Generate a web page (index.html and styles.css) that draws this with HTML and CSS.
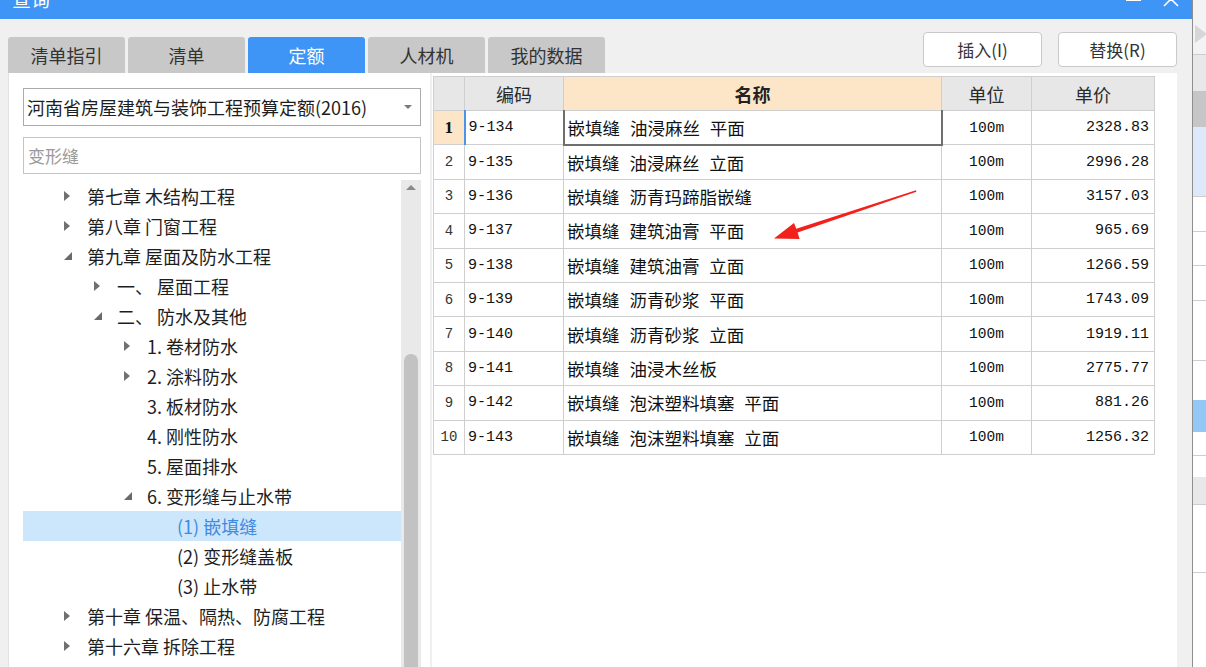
FILE: index.html
```html
<!DOCTYPE html>
<html lang="zh-CN">
<head>
<meta charset="utf-8">
<title>查询</title>
<link rel="stylesheet" href="styles.css">
</head>
<body>
<div class="screen">
  <div class="window">
    <div class="titlebar">
      <span class="title">查询</span>
      <div class="winbtns">
        <span class="wb-min"></span>
        <svg class="wb-close" width="16" height="16" viewBox="0 0 16 16"><path d="M1 1 L15 15 M15 1 L1 15" stroke="#fff" stroke-width="1.6" fill="none"/></svg>
      </div>
    </div>
    <div class="body">
      <div class="toolbar">
        <div class="tabs">
          <div class="tab">清单指引</div>
          <div class="tab">清单</div>
          <div class="tab active">定额</div>
          <div class="tab">人材机</div>
          <div class="tab">我的数据</div>
        </div>
        <div class="actions">
          <button class="btn">插入(I)</button>
          <button class="btn">替换(R)</button>
        </div>
      </div>
      <div class="panes">
        <div class="left">
          <div class="combo"><span class="combo-text">河南省房屋建筑与装饰工程预算定额(2016)</span><span class="combo-arrow"></span></div>
          <div class="search">变形缝</div>
          <div class="treewrap">
            <ul class="tree">
              <li class="node l0"><span class="tw"><svg width="6" height="10" viewBox="0 0 6 10"><path d="M0 0 L6 5 L0 10 Z" fill="#707070"/></svg></span>第七章 木结构工程</li>
              <li class="node l0"><span class="tw"><svg width="6" height="10" viewBox="0 0 6 10"><path d="M0 0 L6 5 L0 10 Z" fill="#707070"/></svg></span>第八章 门窗工程</li>
              <li class="node l0"><span class="tw"><svg width="8" height="8" viewBox="0 0 8 8"><path d="M8 0 L8 8 L0 8 Z" fill="#6a6a6a"/></svg></span>第九章 屋面及防水工程</li>
              <li class="node l1"><span class="tw"><svg width="6" height="10" viewBox="0 0 6 10"><path d="M0 0 L6 5 L0 10 Z" fill="#707070"/></svg></span>一、 屋面工程</li>
              <li class="node l1"><span class="tw"><svg width="8" height="8" viewBox="0 0 8 8"><path d="M8 0 L8 8 L0 8 Z" fill="#6a6a6a"/></svg></span>二、 防水及其他</li>
              <li class="node l2"><span class="tw"><svg width="6" height="10" viewBox="0 0 6 10"><path d="M0 0 L6 5 L0 10 Z" fill="#707070"/></svg></span>1. 卷材防水</li>
              <li class="node l2"><span class="tw"><svg width="6" height="10" viewBox="0 0 6 10"><path d="M0 0 L6 5 L0 10 Z" fill="#707070"/></svg></span>2. 涂料防水</li>
              <li class="node l2"><span class="tw"></span>3. 板材防水</li>
              <li class="node l2"><span class="tw"></span>4. 刚性防水</li>
              <li class="node l2"><span class="tw"></span>5. 屋面排水</li>
              <li class="node l2"><span class="tw"><svg width="8" height="8" viewBox="0 0 8 8"><path d="M8 0 L8 8 L0 8 Z" fill="#6a6a6a"/></svg></span>6. 变形缝与止水带</li>
              <li class="node l3 selected"><span class="tw"></span>(1) 嵌填缝</li>
              <li class="node l3"><span class="tw"></span>(2) 变形缝盖板</li>
              <li class="node l3"><span class="tw"></span>(3) 止水带</li>
              <li class="node l0"><span class="tw"><svg width="6" height="10" viewBox="0 0 6 10"><path d="M0 0 L6 5 L0 10 Z" fill="#707070"/></svg></span>第十章 保温、隔热、防腐工程</li>
              <li class="node l0"><span class="tw"><svg width="6" height="10" viewBox="0 0 6 10"><path d="M0 0 L6 5 L0 10 Z" fill="#707070"/></svg></span>第十六章 拆除工程</li>
            </ul>
            <div class="vscroll">
              <span class="vs-up"></span>
              <span class="vs-thumb"></span>
            </div>
          </div>
        </div>
        <div class="right">
          <table class="grid">
            <colgroup>
              <col class="c-rn"><col class="c-code"><col class="c-name"><col class="c-unit"><col class="c-price">
            </colgroup>
            <thead>
              <tr><th class="rn"></th><th>编码</th><th class="hl">名称</th><th>单位</th><th>单价</th></tr>
            </thead>
            <tbody>
              <tr class="cur"><td class="rn">1</td><td class="code">9-134</td><td class="name">嵌填缝 油浸麻丝 平面</td><td class="unit">100m</td><td class="price">2328.83</td></tr>
              <tr><td class="rn">2</td><td class="code">9-135</td><td class="name">嵌填缝 油浸麻丝 立面</td><td class="unit">100m</td><td class="price">2996.28</td></tr>
              <tr><td class="rn">3</td><td class="code">9-136</td><td class="name">嵌填缝 沥青玛蹄脂嵌缝</td><td class="unit">100m</td><td class="price">3157.03</td></tr>
              <tr><td class="rn">4</td><td class="code">9-137</td><td class="name">嵌填缝 建筑油膏 平面</td><td class="unit">100m</td><td class="price">965.69</td></tr>
              <tr><td class="rn">5</td><td class="code">9-138</td><td class="name">嵌填缝 建筑油膏 立面</td><td class="unit">100m</td><td class="price">1266.59</td></tr>
              <tr><td class="rn">6</td><td class="code">9-139</td><td class="name">嵌填缝 沥青砂浆 平面</td><td class="unit">100m</td><td class="price">1743.09</td></tr>
              <tr><td class="rn">7</td><td class="code">9-140</td><td class="name">嵌填缝 沥青砂浆 立面</td><td class="unit">100m</td><td class="price">1919.11</td></tr>
              <tr><td class="rn">8</td><td class="code">9-141</td><td class="name">嵌填缝 油浸木丝板</td><td class="unit">100m</td><td class="price">2775.77</td></tr>
              <tr><td class="rn">9</td><td class="code">9-142</td><td class="name">嵌填缝 泡沫塑料填塞 平面</td><td class="unit">100m</td><td class="price">881.26</td></tr>
              <tr><td class="rn">10</td><td class="code">9-143</td><td class="name">嵌填缝 泡沫塑料填塞 立面</td><td class="unit">100m</td><td class="price">1256.32</td></tr>
            </tbody>
          </table>
        </div>
      </div>
    </div>
  </div>
  <div class="behind">
    <div class="bh b1"><span class="bh-tri"></span></div>
    <div class="bh b2"></div>
    <div class="bh b3"></div>
    <div class="bh b4"></div>
    <div class="bh b5"></div>
    <div class="bh b6"></div>
    <div class="bh b7"></div>
    <div class="bh b8"></div>
    <div class="bh b9"></div>
    <div class="bh b10"></div>
    <div class="bh b11"></div>
    <div class="bh b12"></div>
    <div class="bh b13"></div>
    <div class="bh b14"></div>
  </div>
</div>
<svg class="annot" width="1206" height="667" viewBox="0 0 1206 667">
  <polygon points="774,238.5 794,223 796.3,228.8 916,190.3 916.4,191.7 797.6,232.6 799.6,239" fill="#f2211b"/>
</svg>
</body>
</html>
```

FILE: styles.css
```css
* { box-sizing: border-box; }
html, body { margin: 0; padding: 0; }
body {
  width: 1206px;
  height: 667px;
  overflow: hidden;
  background: #f0f0f0;
  font-family: "Noto Sans CJK SC", "Noto Sans", sans-serif;
  color: #1e1e1e;
}
.screen {
  display: flex;
  height: 667px;
}
.window {
  width: 1193px;
  flex: none;
  border-right: 1px solid #8e8e8e;
  background: #f0f0f0;
  display: flex;
  flex-direction: column;
  height: 667px;
}
.titlebar {
  height: 40px;
  margin-top: -21px;
  flex: none;
  background: #3f95f5;
  color: #fff;
  display: flex;
  align-items: center;
  padding-left: 12px;
}
.title {
  font-size: 19px;
  line-height: 40px;
}
.winbtns {
  margin-left: auto;
  display: flex;
  align-items: center;
  gap: 22px;
  padding-right: 13px;
}
.wb-min {
  display: block;
  width: 15px;
  height: 2px;
  background: #fff;
  margin-top: 2px;
}
.wb-close { display: block; }

.body {
  flex: 1;
  display: flex;
  flex-direction: column;
  min-height: 0;
}
.toolbar {
  height: 54px;
  flex: none;
  display: flex;
  padding: 0 15px 0 8px;
}
.tabs {
  display: flex;
  gap: 3px;
  align-self: flex-end;
}
.tab {
  width: 117px;
  height: 36px;
  background: #c8c8c8;
  border-radius: 3px 3px 0 0;
  font-size: 18px;
  line-height: 36px;
  text-align: center;
  color: #333;
}
.tab.active {
  background: #3f95f5;
  color: #fff;
}
.actions {
  margin-left: auto;
  margin-top: 13px;
  display: flex;
  gap: 16px;
  align-self: flex-start;
}
.btn {
  width: 119px;
  height: 35px;
  background: #fff;
  border: 1px solid #c9c9c9;
  border-radius: 4px;
  font-family: "Noto Sans CJK SC", "Noto Sans", sans-serif;
  font-size: 17px;
  color: #333;
  padding: 0;
}

.panes {
  flex: 1;
  display: flex;
  gap: 2px;
  padding-left: 8px;
  min-height: 0;
}
.left {
  width: 422px;
  background: #fff;
  padding: 15px 9px 0 14px;
  display: flex;
  flex-direction: column;
  border-left: 1px solid #e2e2e2;
}
.combo {
  height: 38px;
  border: 1px solid #ababab;
  display: flex;
  align-items: center;
  padding-left: 3px;
  font-size: 18px;
  color: #1e1e1e;
}
.combo-arrow {
  margin-left: auto;
  margin-right: 8px;
  width: 0;
  height: 0;
  border-left: 4px solid transparent;
  border-right: 4px solid transparent;
  border-top: 4px solid #7a7a7a;
}
.search {
  margin-top: 11px;
  height: 37px;
  border: 1px solid #c4c4c4;
  padding-left: 4px;
  font-size: 17px;
  line-height: 35px;
  color: #9a9a9a;
}
.treewrap {
  margin-top: 6px;
  flex: 1;
  display: flex;
  min-height: 0;
}
.tree {
  list-style: none;
  margin: 0;
  padding: 1px 0 0 0;
  flex: 1;
}
.node {
  height: 30px;
  display: flex;
  align-items: center;
  font-size: 18px;
  white-space: nowrap;
  color: #1e1e1e;
}
.node.l0 { padding-left: 41px; }
.node.l1 { padding-left: 71px; }
.node.l2 { padding-left: 101px; }
.node.l3 { padding-left: 131px; }
.node.selected {
  background: #cce6fc;
  color: #3f8ae0;
}
.tw {
  width: 23px;
  flex: none;
  display: flex;
  align-items: center;
}
.tw svg { display: block; }
.vscroll {
  width: 20px;
  flex: none;
  background: #e9e9e9;
  display: flex;
  flex-direction: column;
  align-items: center;
}
.vs-up {
  margin-top: 5px;
  width: 0;
  height: 0;
  border-left: 5px solid transparent;
  border-right: 5px solid transparent;
  border-bottom: 5px solid #8a8a8a;
}
.vs-thumb {
  margin-top: 164px;
  width: 14px;
  flex: 1;
  background: #c2c2c2;
  border-radius: 7px 7px 0 0;
}

.right {
  width: 745px;
  background: #fff;
  padding: 3px 0 0 1px;
}
.grid {
  border-collapse: collapse;
  table-layout: fixed;
  width: 721px;
}
.c-rn { width: 31px; }
.c-code { width: 99px; }
.c-name { width: 378px; }
.c-unit { width: 90px; }
.c-price { width: 123px; }
.grid th, .grid td {
  border: 1px solid #cfcfcf;
  padding: 0;
  white-space: nowrap;
  overflow: hidden;
}
.grid thead tr { height: 34px; }
.grid tbody tr { height: 34.4px; }
.grid th {
  background: #e7e7e7;
  font-weight: normal;
  font-size: 18px;
  color: #2a2a2a;
  text-align: center;
}
.grid th.hl {
  background: #fde5c8;
  font-weight: bold;
  color: #222;
}
.grid td {
  color: #111;
}
.grid td.rn {
  text-align: center;
  font-family: "Liberation Mono", monospace;
  font-size: 14px;
  color: #333;
}
.grid tr.cur td.rn {
  background: #fde5c8;
  font-family: "Liberation Serif", serif;
  font-weight: bold;
  font-size: 17px;
  color: #111;
}
.grid td.code {
  font-family: "Liberation Mono", monospace;
  font-size: 15px;
  padding-left: 3px;
}
.grid tr.cur td.code {
  border-left: 2px solid #4a94ea;
}
.grid td.name {
  font-size: 17.5px;
  padding-left: 3px;
  word-spacing: 6px;
}
.grid tr.cur td.name {
  border: 2px solid #6f6f6f;
  border-top: 1px solid #5ea2f2;
}
.grid td.unit {
  font-family: "Liberation Mono", monospace;
  font-size: 14.5px;
  text-align: center;
}
.grid td.price {
  font-family: "Liberation Mono", monospace;
  font-size: 15px;
  text-align: right;
  padding-right: 5px;
}

.behind {
  flex: 1;
  background: #fff;
  display: flex;
  flex-direction: column;
}
.bh { flex: none; border-bottom: 1px solid #cdcdcd; }
.b1 { height: 55px; background: #f3f3f3; position: relative; }
.bh-tri {
  position: absolute;
  left: 2px;
  top: 25px;
  width: 0; height: 0;
  border-top: 9px solid transparent;
  border-bottom: 9px solid transparent;
  border-left: 12px solid #d6d6d6;
}
.b2 { height: 36px; background: #e8e8e8; border-bottom: none; }
.b3 { height: 36px; background: #c6c6c6; border-bottom: none; }
.b4 { height: 70px; background: #dde8fa; }
.b5 { height: 35px; }
.b6 { height: 34px; }
.b7 { height: 35px; }
.b8 { height: 60px; }
.b9 { height: 39px; border-bottom: none; }
.b10 { height: 32px; background: #93c7f6; border-bottom: none; }
.b11 { height: 24px; }
.b12 { height: 21px; border-bottom: none; }
.b13 { height: 28px; background: #e8e8e8; }
.b14 { height: 68px; }

.annot {
  position: absolute;
  left: 0;
  top: 0;
  pointer-events: none;
}
```
